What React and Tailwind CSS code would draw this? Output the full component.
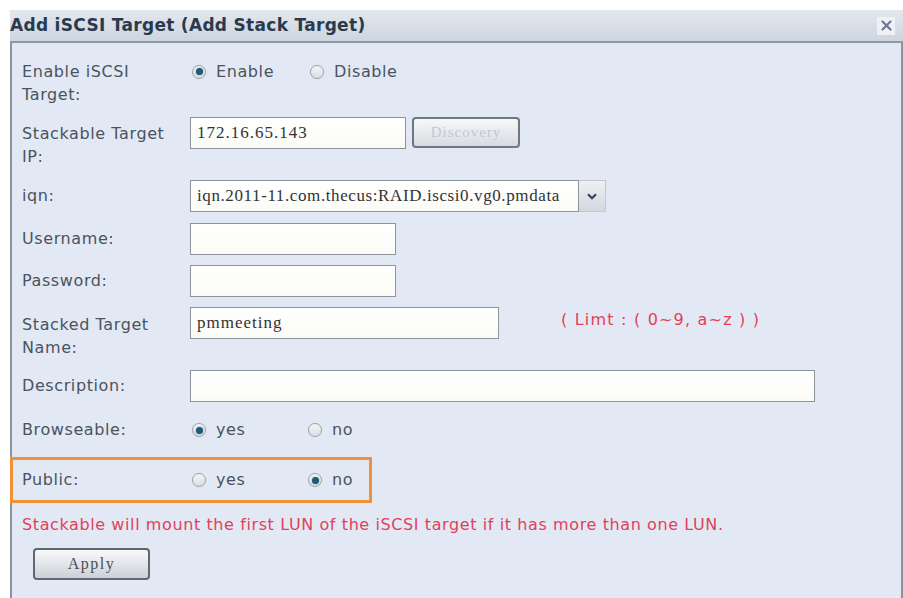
import React from "react";

const sans = { fontFamily: '"DejaVu Sans", Verdana, sans-serif' };
const serif = { fontFamily: '"Liberation Serif", "Times New Roman", serif' };

function Radio({ checked, label, className = "" }) {
  return (
    <span className={`flex items-center gap-[10px] ${className}`}>
      <span className="flex h-[14px] w-[14px] shrink-0 items-center justify-center rounded-full border border-[#9aa3ad] bg-gradient-to-b from-[#f4f6f8] to-[#d9dee4] shadow-[0_0_1px_#c9d0d8]">
        {checked && <span className="h-[7px] w-[7px] rounded-full bg-[#1f5a78] shadow-[0_0_2px_#6fa8c8]" />}
      </span>
      <span className="text-[#4a5360]">{label}</span>
    </span>
  );
}

function TextBox({ value = "", className = "", track = "tracking-[1px]" }) {
  return (
    <div
      className={`flex h-[32px] shrink-0 items-center overflow-hidden whitespace-nowrap border border-[#8c949c] bg-gradient-to-b from-white to-[#fbfbf6] px-[6px] text-[17px] text-[#333] ${track} ${className}`}
      style={serif}
    >
      {value}
    </div>
  );
}

function Label({ children, pt = "pt-[4px]" }) {
  return <div className={`w-[168px] shrink-0 leading-[23px] text-[#4a5360] ${pt}`}>{children}</div>;
}

export default function App() {
  return (
    <div className="h-[598px] w-[903px] overflow-hidden bg-white pt-[10px] pl-[10px] text-[16px] tracking-[0.6px]" style={sans}>
      {/* title bar */}
      <div className="flex h-[33px] items-center justify-between border-b-2 border-[#8d98a6] bg-gradient-to-b from-[#e4e8ee] to-[#cdd5df] pr-[8px]">
        <span className="text-[17px] font-bold tracking-[0.3px] text-[#2a3a4c]">Add iSCSI Target (Add Stack Target)</span>
        <span className="flex h-[18px] w-[18px] items-center justify-center bg-[#eef1f6] text-[#6c7893]">
          <svg width="11" height="11" viewBox="0 0 11 11">
            <path d="M1.5 1.5 L9.5 9.5 M9.5 1.5 L1.5 9.5" stroke="currentColor" strokeWidth="2.2" strokeLinecap="round" />
          </svg>
        </span>
      </div>

      {/* body */}
      <div className="h-[560px] border-l-2 border-r-2 border-[#8a929c] bg-[#e2e9f4] pl-[10px] pt-[17px]">
        <div className="flex h-[46px] items-start">
          <Label pt="pt-0">Enable iSCSI<br />Target:</Label>
          <div className="flex h-[23px] items-center">
            <Radio checked label="Enable" className="w-[120px] pl-[2px]" />
            <Radio label="Disable" />
          </div>
        </div>

        <div className="mt-[11px] flex h-[32px]">
          <Label pt="pt-[5px]">Stackable Target<br />IP:</Label>
          <TextBox value="172.16.65.143" className="w-[216px]" />
          <div
            className="ml-[6px] flex h-[31px] w-[108px] items-center justify-center rounded-[4px] border-2 border-[#6f7780] bg-gradient-to-b from-[#f7f8fa] to-[#d7dbe0] text-[15px] tracking-[1px] text-[#c4c8cf]"
            style={serif}
          >
            Discovery
          </div>
        </div>

        <div className="mt-[31px] flex h-[32px]">
          <Label>iqn:</Label>
          <TextBox value="iqn.2011-11.com.thecus:RAID.iscsi0.vg0.pmdata" className="w-[389px] px-[3px]" track="tracking-[0.6px]" />
          <div className="flex h-[32px] w-[27px] items-center justify-center border border-l-0 border-[#c3c8cf] bg-gradient-to-b from-[#eef0f3] to-[#d3d8de] text-[#34436a]">
            <svg width="10" height="7" viewBox="0 0 10 7">
              <path d="M1 1.2 L5 5.2 L9 1.2" fill="none" stroke="currentColor" strokeWidth="2.2" />
            </svg>
          </div>
        </div>

        <div className="mt-[11px] flex h-[32px]">
          <Label>Username:</Label>
          <TextBox className="w-[206px]" />
        </div>

        <div className="mt-[10px] flex h-[32px]">
          <Label>Password:</Label>
          <TextBox className="w-[206px]" />
        </div>

        <div className="mt-[10px] flex h-[32px]">
          <Label pt="pt-[6px]">Stacked Target<br />Name:</Label>
          <TextBox value="pmmeeting" className="w-[309px]" />
          <span className="ml-[62px] pt-[1px] text-[16px] tracking-[1.2px] text-[#e2405a]">( Limt : ( 0~9, a~z ) )</span>
        </div>

        <div className="mt-[31px] flex h-[32px]">
          <Label>Description:</Label>
          <TextBox className="w-[625px]" />
        </div>

        <div className="mt-[18px] flex h-[20px] items-center">
          <div className="w-[168px] shrink-0 text-[#4a5360]">Browseable:</div>
          <Radio checked label="yes" className="w-[118px] pl-[2px]" />
          <Radio label="no" />
        </div>

        <div className="-ml-[12px] mt-[17px] flex h-[46px] w-[362px] items-center border-[3px] border-[#f0913a] pl-[9px]">
          <div className="w-[168px] shrink-0 text-[#4a5360]">Public:</div>
          <Radio label="yes" className="w-[118px] pl-[2px]" />
          <Radio checked label="no" />
        </div>

        <div className="mt-[13px] leading-[18px] text-[#e2405a]">
          Stackable will mount the first LUN of the iSCSI target if it has more than one LUN.
        </div>

        <div
          className="ml-[11px] mt-[14px] flex h-[32px] w-[117px] items-center justify-center rounded-[4px] border-2 border-[#5f6770] bg-gradient-to-b from-[#f8f9fb] to-[#ccd1d7] text-[16px] tracking-[1.5px] text-[#4a5058]"
          style={serif}
        >
          Apply
        </div>
      </div>
    </div>
  );
}
